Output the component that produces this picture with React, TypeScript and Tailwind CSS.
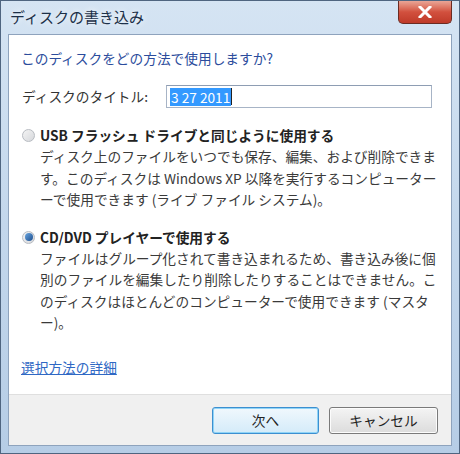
const jp = { fontFamily: '"Noto Sans CJK JP", "Noto Sans", sans-serif' };

const Radio = ({ checked }: { checked?: boolean }) => (
  <div className="w-[13px] h-[13px] rounded-full border border-[#b8bcc2] bg-gradient-to-br from-[#f4f4f4] to-[#d6d8dc] flex items-center justify-center shrink-0">
    {checked && <div className="w-[8px] h-[8px] rounded-full bg-gradient-to-br from-[#6aa6e0] to-[#1d4f8f]" />}
  </div>
);

const Option = ({ checked, title, lines }: { checked?: boolean; title: string; lines: string[] }) => (
  <div className="flex flex-col">
    <div className="flex items-center gap-[5px] pl-[1px]">
      <Radio checked={checked} />
      <div className="font-bold text-[#222] leading-[21px] whitespace-nowrap">{title}</div>
    </div>
    <div className="pl-[19px] text-[#3a3a3a] leading-[21.5px]">
      {lines.map((l) => (
        <div key={l} className="whitespace-nowrap">{l}</div>
      ))}
    </div>
  </div>
);

export default function App() {
  return (
    <div
      className="w-[460px] h-[454px] border border-[#4f6580] bg-gradient-to-b from-[#d5e4f3] via-[#c3d7ec] to-[#b6cde6] flex flex-col text-[13.7px]"
      style={jp}
    >
      {/* title bar */}
      <div className="h-[33px] flex items-start justify-between shrink-0">
        <div className="pl-[9px] pt-[6px] text-[15px] text-[#1c3048] leading-[20px] [text-shadow:0_0_6px_#fff]">
          ディスクの書き込み
        </div>
        <div className="mr-[7px] w-[54px] h-[23px] rounded-b-[5px] border border-t-0 border-[#6b2b22] bg-gradient-to-b from-[#e9a596] via-[#d2503e] to-[#bf3a29] flex items-center justify-center">
          <svg width="14" height="12" viewBox="0 0 14 12">
            <path d="M2 1 L12 11 M12 1 L2 11" stroke="#fff" strokeWidth="3" strokeLinecap="square" />
          </svg>
        </div>
      </div>

      {/* client area */}
      <div className="mx-[7px] flex-1 border border-[#8ea3bd] bg-white flex flex-col">
        <div className="flex-1 flex flex-col pl-[12px] pt-[13px]">
          <div className="text-[#2b4c9c] leading-[20px] whitespace-nowrap">このディスクをどの方法で使用しますか?</div>

          <div className="flex items-center mt-[17px]">
            <div className="w-[145px] pl-[1px] text-[#333] whitespace-nowrap">ディスクのタイトル:</div>
            <div className="w-[266px] h-[23px] border border-[#a7b4c6] border-t-[#8e9db3] bg-white flex items-center pl-[3px]">
              <span className="bg-[#3399ff] text-white px-[1px] leading-[18px]">3 27 2011</span>
              <span className="w-[1px] h-[17px] bg-[#222]" />
            </div>
          </div>

          <div className="mt-[17px]">
            <Option
              title="USB フラッシュ ドライブと同じように使用する"
              lines={[
                "ディスク上のファイルをいつでも保存、編集、および削除できま",
                "す。このディスクは Windows XP 以降を実行するコンピューター",
                "ーで使用できます (ライブ ファイル システム)。",
              ]}
            />
          </div>

          <div className="mt-[16px]">
            <Option
              checked
              title="CD/DVD プレイヤーで使用する"
              lines={[
                "ファイルはグループ化されて書き込まれるため、書き込み後に個",
                "別のファイルを編集したり削除したりすることはできません。こ",
                "のディスクはほとんどのコンピューターで使用できます (マスタ",
                "ー)。",
              ]}
            />
          </div>

          <div className="mt-[23px] text-[#2f68c4] underline leading-[20px]">選択方法の詳細</div>
        </div>

        <div className="h-[51px] shrink-0 border-t border-[#dfdfdf] bg-[#f0f0f0] flex items-center justify-end gap-[10px] pr-[13px]">
          <button className="w-[107px] h-[27px] rounded-[3px] border border-[#3c8fd0] shadow-[inset_0_0_0_1px_#8fd4f7] bg-gradient-to-b from-[#f0f8fd] to-[#d4ebf9] text-[#222]">
            次へ
          </button>
          <button className="w-[109px] h-[27px] rounded-[3px] border border-[#7a7a7a] shadow-[inset_0_0_0_1px_#fcfcfc] bg-gradient-to-b from-[#f4f4f4] to-[#dcdcdc] text-[#222]">
            キャンセル
          </button>
        </div>
      </div>
      <div className="h-[7px] shrink-0" />
    </div>
  );
}
